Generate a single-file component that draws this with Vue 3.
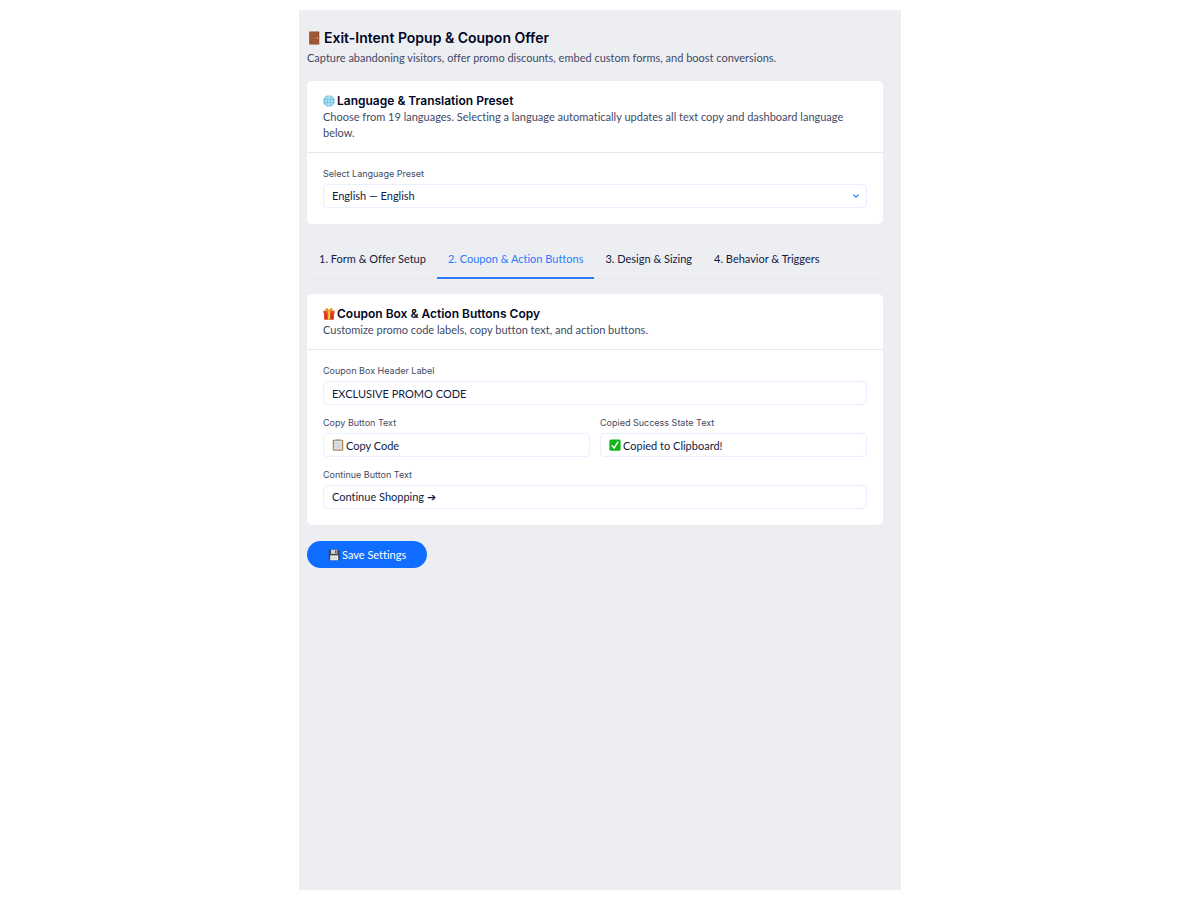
<template>
  <main class="settings">
    <header class="settings__header">
      <h1 class="settings__title">
        <svg class="emoji emoji--title" viewBox="0 0 16 16" aria-hidden="true">
          <rect x="2.5" y="0.5" width="11.5" height="15" rx="0.6" fill="#87482b" />
          <rect x="3.5" y="1.5" width="9.5" height="13.5" fill="#a95f3b" />
          <path d="M5 3h6.500v3.500H5zM5 9.500h6.500v4H5z" fill="#a1583a" stroke="#8c4b2d" stroke-width="0.6" />
          <circle cx="12" cy="8" r="0.9" fill="#f0b452" />
        </svg>
        Exit-Intent Popup &amp; Coupon Offer
      </h1>
      <p class="settings__subtitle">
        Capture abandoning visitors, offer promo discounts, embed custom forms, and boost conversions.
      </p>
    </header>

    <!-- Language preset -->
    <section class="card">
      <div class="card__header">
        <h2 class="card__title">
          <svg class="emoji" viewBox="0 0 16 16" aria-hidden="true">
            <circle cx="8" cy="8" r="7.600" fill="#5cb9dd" />
            <path
              d="M8 .5v15M.5 8h15M2 4h12M2 12h12M8 .5C2.800 4 2.800 12 8 15.500M8 .5c5.200 3.500 5.200 11.500 0 15"
              fill="none"
              stroke="#d5f1fb"
              stroke-width="1"
            />
          </svg>
          Language &amp; Translation Preset
        </h2>
        <p class="card__text">
          Choose from 19 languages. Selecting a language automatically updates all text copy and dashboard language below.
        </p>
      </div>
      <div class="card__body">
        <div class="field">
          <label class="field__label" for="language-preset">Select Language Preset</label>
          <div class="field__box">
            <select id="language-preset" v-model="language" class="field__control">
              <option value="en">English — English</option>
            </select>
            <svg class="field__chevron" viewBox="0 0 8 8" aria-hidden="true">
              <path d="M1.500 2.800 4 5.200l2.500-2.400" fill="none" stroke="#2f7dff" stroke-width="1.200" />
            </svg>
          </div>
        </div>
      </div>
    </section>

    <nav class="tabs" role="tablist">
      <button
        v-for="tab in tabs"
        :key="tab"
        type="button"
        role="tab"
        class="tabs__item"
        :class="{ 'tabs__item--active': tab === activeTab }"
        :aria-selected="tab === activeTab"
        @click="activeTab = tab"
      >
        {{ tab }}
      </button>
    </nav>

    <!-- Coupon copy -->
    <section class="card">
      <div class="card__header">
        <h2 class="card__title">
          <svg class="emoji" viewBox="0 0 16 16" aria-hidden="true">
            <path d="M1.500 6h13v8.500q0 1-1 1h-11q-1 0-1-1z" fill="#d8321f" />
            <path d="M.5 3.500h15v4H.5z" fill="#e8452c" />
            <path d="M6.300 3.500h3.400v12H6.300z" fill="#f6bd3a" />
            <path d="M8 4C3 4.500 2.500.6 4.500.6 6.500.6 7.500 2.500 8 4zm0 0c5 .5 5.500-3.400 3.500-3.400C9.500.6 8.500 2.500 8 4z" fill="#c98a1b" stroke="#f2b632" stroke-width="1" />
          </svg>
          Coupon Box &amp; Action Buttons Copy
        </h2>
        <p class="card__text">Customize promo code labels, copy button text, and action buttons.</p>
      </div>
      <div class="card__body">
        <div class="field">
          <label class="field__label" for="header-label">Coupon Box Header Label</label>
          <div class="field__box">
            <input id="header-label" v-model="form.header" type="text" class="field__control" />
          </div>
        </div>
        <div class="card__row">
          <div class="field">
            <label class="field__label" for="copy-text">Copy Button Text</label>
            <div class="field__box">
              <svg class="emoji" viewBox="0 0 16 16" aria-hidden="true">
                <rect x="1" y="1" width="14" height="14.500" rx="1" fill="#b08c5c" />
                <rect x="2.800" y="2.500" width="10.400" height="11.500" fill="#e0e2e4" />
                <path d="M4.500 6h7M4.500 8.500h7M4.500 11h7" stroke="#c5c8cc" stroke-width="0.8" />
                <path d="M5 .5h6v1.800H5z" fill="#9a9ea3" />
              </svg>
              <input id="copy-text" v-model="form.copy" type="text" class="field__control" />
            </div>
          </div>
          <div class="field">
            <label class="field__label" for="copied-text">Copied Success State Text</label>
            <div class="field__box">
              <svg class="emoji" viewBox="0 0 16 16" aria-hidden="true">
                <rect x="0.5" y="0.5" width="15" height="15" rx="2" fill="#12b61c" />
                <path d="m3.800 8.500 3 3.500 5.400-8.500" fill="none" stroke="#fff" stroke-width="2" />
              </svg>
              <input id="copied-text" v-model="form.copied" type="text" class="field__control" />
            </div>
          </div>
        </div>
        <div class="field">
          <label class="field__label" for="continue-text">Continue Button Text</label>
          <div class="field__box">
            <input id="continue-text" v-model="form.proceed" type="text" class="field__control" />
          </div>
        </div>
      </div>
    </section>

    <button type="button" class="save">
      <svg class="emoji" viewBox="0 0 16 16" aria-hidden="true">
        <path d="M1 1h13l1.500 1.500V15H1z" fill="#3d454d" />
        <path d="M4 1h8.500v5.500H4z" fill="#cbd0d5" />
        <path d="M9.500 2h1.800v3.500H9.500z" fill="#3d454d" />
        <path d="M3 8.500h10.500V15H3z" fill="#f1eeea" />
        <path d="M4.500 10.800h7.500M4.500 12.800h7.500" stroke="#b9b9bb" stroke-width="0.700" />
      </svg>
      Save Settings
    </button>
  </main>
</template>

<script setup>
import { reactive, ref } from 'vue'

const tabs = [
  '1. Form & Offer Setup',
  '2. Coupon & Action Buttons',
  '3. Design & Sizing',
  '4. Behavior & Triggers',
]

const activeTab = ref(tabs[1])
const language = ref('en')

// Text shown in the popup's coupon box and buttons
const form = reactive({
  header: 'EXCLUSIVE PROMO CODE',
  copy: 'Copy Code',
  copied: 'Copied to Clipboard!',
  proceed: 'Continue Shopping ➔',
})
</script>

<style>
body {
  background: #fff;
}
</style>

<style scoped>
.settings {
  box-sizing: border-box;
  max-width: 602px;
  min-height: calc(100vh - 20px);
  margin: 10px auto;
  padding: 18px 18px 18px 8px;
  background: #edeef2;
  color: #131b3f;
  font-family: Lato, "Noto Sans", "DejaVu Sans", sans-serif;
  font-size: 11px;
  font-variant-ligatures: none;
  line-height: 16px;
}

.settings__header {
  margin-bottom: 15px;
}

.settings__title {
  display: flex;
  align-items: center;
  gap: 3px;
  margin: 0 0 2px;
  color: #000624;
  font-family: Inter, sans-serif;
  font-size: 14px;
  font-weight: 600;
  line-height: 20px;
}

.settings__subtitle,
.card__text {
  margin: 0;
  color: #414966;
}

.emoji {
  flex: none;
  width: 12px;
  height: 12px;
}

.emoji--title {
  width: 14px;
  height: 14px;
}

.card {
  border-radius: 5px;
  background: #fff;
}

.card__header {
  padding: 12px 16px 11px;
  border-bottom: 1px solid #e3e8f1;
}

.card__title {
  display: flex;
  align-items: center;
  gap: 2px;
  margin: 0;
  color: #000624;
  font-family: Inter, sans-serif;
  font-size: 12px;
  font-weight: 600;
  line-height: 16px;
}

.card__body {
  display: grid;
  gap: 12px;
  padding: 15px 16px 16px;
}

.card__row {
  display: grid;
  grid-template-columns: 1fr 1fr;
  gap: 10px;
}

.field {
  display: grid;
  gap: 4px;
  min-width: 0;
}

.field__label {
  color: #414966;
  font-family: Inter, sans-serif;
  font-size: 9px;
  line-height: 12px;
}

.field__box {
  display: flex;
  align-items: center;
  gap: 2px;
  box-sizing: border-box;
  height: 24px;
  padding: 0 8px;
  border: 1px solid #e7f0ff;
  border-radius: 4px;
  background: #fff;
}

.field__box:focus-within {
  border-color: #116dff;
}

.field__control {
  flex: 1;
  min-width: 0;
  height: 100%;
  padding: 0;
  border: 0;
  outline: 0;
  appearance: none;
  background: transparent;
  color: inherit;
  font: inherit;
  font-variant-ligatures: none;
}

.field__chevron {
  width: 8px;
  height: 8px;
  margin-right: -2px;
  pointer-events: none;
}

.tabs {
  display: flex;
  margin: 15px 0;
  padding-left: 1px;
  border-bottom: 1px solid #e6e8ed;
}

.tabs__item {
  height: 40px;
  margin-bottom: -1px;
  padding: 2px 11px 0;
  border: 0;
  border-bottom: 2px solid transparent;
  background: none;
  color: inherit;
  font: inherit;
  font-variant-ligatures: none;
  cursor: pointer;
}

.tabs__item--active {
  border-bottom-color: #2b7bff;
  color: #2b7bff;
}

.save {
  display: inline-flex;
  align-items: center;
  gap: 2px;
  height: 27px;
  margin-top: 16px;
  padding: 0 21px;
  border: 0;
  border-radius: 14px;
  background: #116dff;
  color: #fff;
  font: inherit;
  font-variant-ligatures: none;
  cursor: pointer;
}
</style>
